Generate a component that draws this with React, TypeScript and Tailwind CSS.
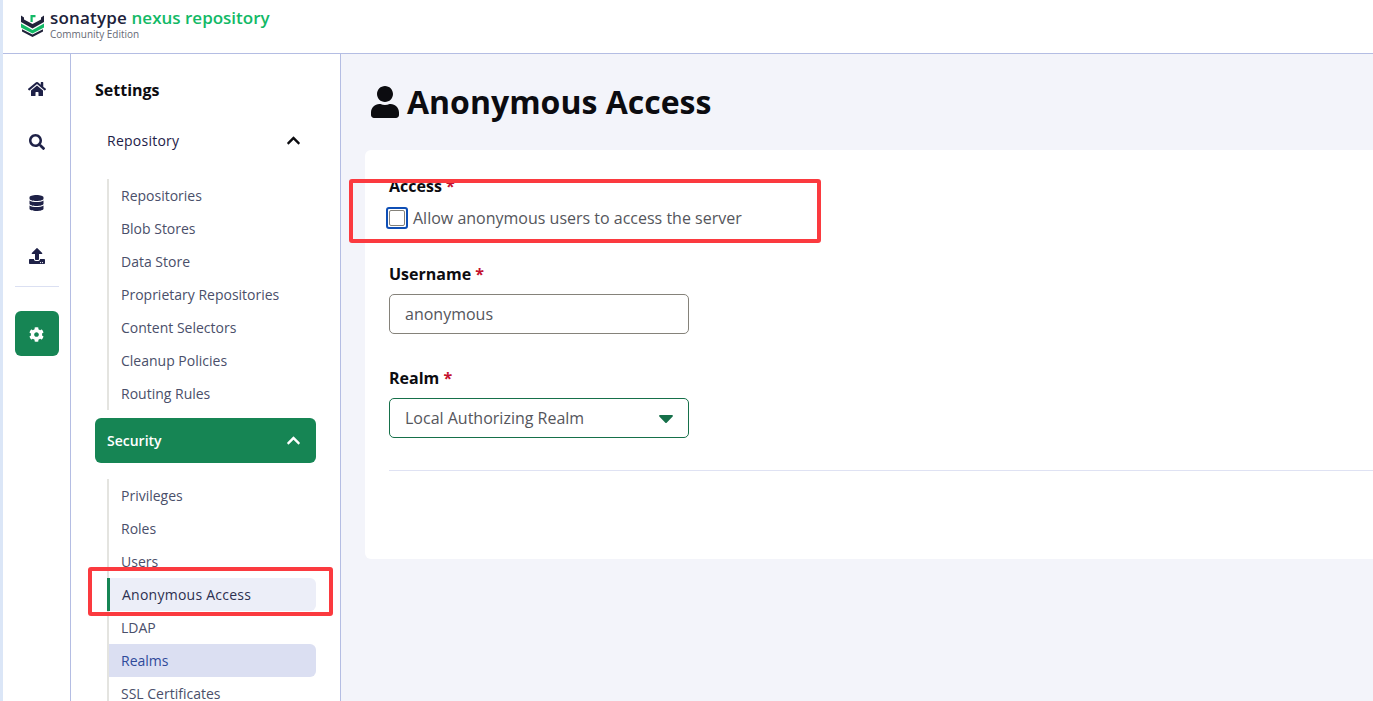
import { FaCaretDown, FaChevronUp, FaCog, FaDatabase, FaHome, FaSearch, FaUpload, FaUser } from "react-icons/fa";

const repo = ["Repositories", "Blob Stores", "Data Store", "Proprietary Repositories", "Content Selectors", "Cleanup Policies", "Routing Rules"];

function Item({ label }: { label: string }) {
  return <li className="h-[33px] pl-3 flex items-center text-[14px] text-[#4a4f6a]">{label}</li>;
}

function Logo() {
  return (
    <svg width="23" height="23" viewBox="0 0 23 23" className="shrink-0 mt-[6px]">
      <path d="M0 1.5 L3 3.5 V5.5 L11.5 10 L20 5.5 V3.5 L23 1.5 V8 L11.5 14.5 L0 8 Z" fill="#20223a" />
      <path d="M0 9.5 L11.5 16 L23 9.5 V13.5 L11.5 19.6 L0 13.5 Z" fill="#12b966" />
      <path d="M1 15.2 L11.5 20.6 L22 15.2 V17.5 L11.5 23 L1 17.5 Z" fill="#20223a" />
      <path d="M9.5 8 V1 H14.5 V3.2 H11.7 V8 Z" fill="#12b966" />
    </svg>
  );
}

export default function App() {
  return (
    <div className="relative h-[701px] w-[1373px] overflow-hidden flex bg-[#dbe6f7] font-['Open_Sans','Noto_Sans',sans-serif]">
      <div className="w-[3px] shrink-0" />
      <div className="flex-1 min-w-0 flex flex-col bg-white">
        <header className="h-[54px] shrink-0 border-b border-[#b4bde3] flex items-start pl-[18px] pt-[8px] gap-[6px]">
          <Logo />
          <div className="flex flex-col">
            <div className="text-[17px] leading-[20px] font-semibold whitespace-nowrap">
              <span className="text-[#20223a] font-semibold tracking-[0.2px]">sonatype</span>{" "}
              <span className="text-[#12b966] font-semibold">nexus repository</span>
            </div>
            <div className="text-[10px] leading-[12px] text-[#666a75]">Community Edition</div>
          </div>
        </header>
        <div className="flex-1 min-h-0 flex">
          <nav className="w-[68px] shrink-0 border-r border-[#b4bde3] flex flex-col items-center text-[#1e2147]">
            <FaHome className="mt-[26px] w-[18px] h-[18px]" />
            <FaSearch className="mt-[36px] w-[16px] h-[16px]" />
            <FaDatabase className="mt-[45px] w-[15px] h-[16px]" />
            <FaUpload className="mt-[37px] w-[16px] h-[16px]" />
            <div className="mt-[22px] w-[44px] h-px bg-[#dbe0f2]" />
            <div className="mt-[24px] w-[44px] h-[45px] rounded-md bg-[#168554] text-white flex items-center justify-center">
              <FaCog className="w-[15px] h-[15px] mt-[1px]" />
            </div>
          </nav>
          <aside className="w-[270px] shrink-0 border-r border-[#b4bde3] pl-6 pr-6 overflow-hidden">
            <h2 className="mt-[24px] h-[24px] leading-[24px] text-[16px] font-bold text-[#0c0c10]">Settings</h2>
            <div className="mt-[16px] h-[45px] px-3 flex items-center justify-between text-[14px] font-medium tracking-[0.25px] text-[#1e2147]">
              Repository
              <FaChevronUp className="w-[15px] h-[15px] mr-[3px] text-[#0c0c10]" />
            </div>
            <ul className="mt-4 ml-3 border-l-2 border-[#e4e4e0]">
              {repo.map((r) => <Item key={r} label={r} />)}
            </ul>
            <div className="mt-2 h-[45px] px-3 flex items-center justify-between rounded-md bg-[#168554] text-white text-[14px] font-semibold">
              Security
              <FaChevronUp className="w-[15px] h-[15px] mr-[3px]" />
            </div>
            <ul className="mt-4 ml-3 border-l-2 border-[#e4e4e0]">
              <Item label="Privileges" />
              <Item label="Roles" />
              <Item label="Users" />
              <li className="-ml-[2px] h-[33px] pl-3 flex items-center text-[14px] font-medium tracking-[0.25px] text-[#2c3050] bg-[#eceef8] border-l-[3px] border-[#168554] rounded-r-md">Anonymous Access</li>
              <Item label="LDAP" />
              <li className="h-[33px] pl-3 flex items-center text-[14px] text-[#2f4a9a] bg-[#dbdff2] rounded-r-md">Realms</li>
              <Item label="SSL Certificates" />
            </ul>
          </aside>
          <main className="flex-1 min-w-0 bg-[#f3f4fa] pl-6 overflow-hidden">
            <h1 className="mt-[27px] ml-[6px] h-[42px] flex items-center gap-[8px] text-[32px] font-bold text-[#0c0c10] whitespace-nowrap">
              <FaUser className="w-[28px] h-[32px]" />
              Anonymous Access
            </h1>
            <section className="mt-[27px] h-[409px] bg-white rounded-l-md pl-6 pt-[25px]">
              <div className="text-[16px] leading-[22px] font-bold text-[#0c0c10]">Access <span className="text-[#c4122f]">*</span></div>
              <label className="mt-[10px] h-[22px] flex items-center text-[16px] text-[#55565c] whitespace-nowrap">
                <span className="-ml-[3px] w-[22px] h-[22px] rounded-[3px] border-2 border-[#0f4fb5] flex items-center justify-center bg-white">
                  <span className="w-[16px] h-[16px] rounded-[2px] border border-[#85827a]" />
                </span>
                <span className="ml-[5px]">Allow anonymous users to access the server</span>
              </label>
              <div className="mt-[34px] text-[16px] leading-[22px] font-bold text-[#0c0c10]">Username <span className="text-[#c4122f]">*</span></div>
              <div className="mt-[9px] w-[300px] h-[40px] px-[15px] flex items-center rounded-[5px] border border-[#85827a] text-[16px] text-[#55565c]">anonymous</div>
              <div className="mt-[33px] text-[16px] leading-[22px] font-bold text-[#0c0c10]">Realm <span className="text-[#c4122f]">*</span></div>
              <div className="mt-[9px] w-[300px] h-[40px] px-[15px] flex items-center justify-between rounded-[5px] border border-[#16704a] text-[16px] text-[#55565c]">
                Local Authorizing Realm
                <FaCaretDown className="w-[24px] h-[24px] text-[#16704a] -mr-[5px]" />
              </div>
              <div className="mt-[32px] h-px bg-[#dfe2f3]" />
            </section>
          </main>
        </div>
      </div>
      <div className="absolute left-[349px] top-[179px] w-[472px] h-[64px] border-4 border-[#fb3a3f] rounded-[3px]" />
      <div className="absolute left-[88px] top-[567px] w-[245px] h-[49px] border-4 border-[#fb3a3f] rounded-[3px]" />
    </div>
  );
}
